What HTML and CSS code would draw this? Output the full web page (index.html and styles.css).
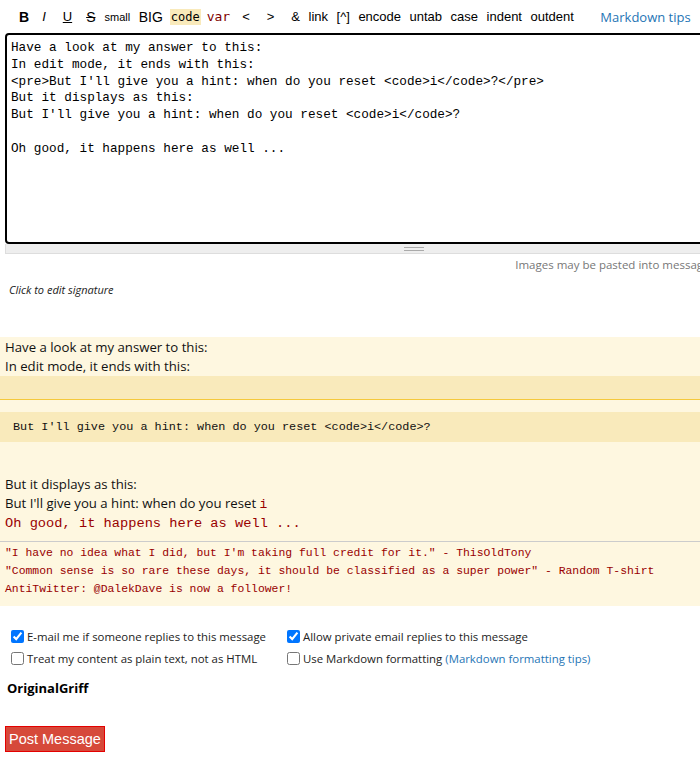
FILE: index.html
```html
<!DOCTYPE html>
<html>
<head>
    <title>Reply</title>
    <link rel="stylesheet" href="styles.css">
</head>
<body>
    <div class="editor">
        <div class="toolbar">
            <span class="tb bold">B</span>
            <span class="tb ital">I</span>
            <span class="tb under">U</span>
            <span class="tb strike">S</span>
            <span class="tb small">small</span>
            <span class="tb big">BIG</span>
            <span class="tb code">code</span>
            <span class="tb var">var</span>
            <span class="tb sym">&lt;</span>
            <span class="tb sym">&gt;</span>
            <span class="tb">&amp;</span>
            <span class="tb">link</span>
            <span class="tb">[^]</span>
            <span class="tb">encode</span>
            <span class="tb">untab</span>
            <span class="tb">case</span>
            <span class="tb">indent</span>
            <span class="tb">outdent</span>
            <a class="tips" href="#">Markdown tips</a>
        </div>
        <textarea class="msg" spellcheck="false">Have a look at my answer to this:
In edit mode, it ends with this:
&lt;pre&gt;But I'll give you a hint: when do you reset &lt;code&gt;i&lt;/code&gt;?&lt;/pre&gt;
But it displays as this:
But I'll give you a hint: when do you reset &lt;code&gt;i&lt;/code&gt;?

Oh good, it happens here as well ...</textarea>
        <div class="grip"><span></span></div>
        <div class="hint">Images may be pasted into messages</div>
    </div>

    <div class="sig-edit">Click to edit signature</div>

    <div class="preview">
        <p>Have a look at my answer to this:</p>
        <p>In edit mode, it ends with this:</p>
        <div class="band"></div>
        <pre class="pre-block">But I'll give you a hint: when do you reset &lt;code&gt;i&lt;/code&gt;?</pre>
        <p class="after">But it displays as this:</p>
        <p>But I'll give you a hint: when do you reset <code class="inline">i</code></p>
        <pre class="red">Oh good, it happens here as well ...</pre>
        <div class="signature">
            <div>"I have no idea what I did, but I'm taking full credit for it." - ThisOldTony</div>
            <div>"Common sense is so rare these days, it should be classified as a super power" - Random T-shirt</div>
            <div>AntiTwitter: @DalekDave is now a follower!</div>
        </div>
    </div>

    <div class="options">
        <label><input type="checkbox" checked> E-mail me if someone replies to this message</label>
        <label><input type="checkbox" checked> Allow private email replies to this message</label>
        <label><input type="checkbox"> Treat my content as plain text, not as HTML</label>
        <label><input type="checkbox"> Use Markdown formatting <a href="#">(Markdown formatting tips)</a></label>
    </div>

    <div class="author">OriginalGriff</div>

    <button class="post">Post Message</button>
</body>
</html>
```

FILE: styles.css
```css
html {
    overflow: hidden;
}

body {
    margin: 0;
    padding: 0 0 0 5px;
    font-family: "Open Sans", sans-serif;
    font-size: 13.2px;
    color: #111;
    background: #fff;
}

.editor {
    width: 710px;
}

.toolbar {
    display: flex;
    align-items: center;
    height: 33px;
    padding-left: 14px;
    font-family: "Liberation Sans", Arial, sans-serif;
    font-size: 13px;
    color: #000;
    white-space: nowrap;
}

.tb {
    margin-right: 8.5px;
}

.bold { font-weight: bold; font-size: 14px; margin-right: 13px; }
.ital { font-style: italic; margin-right: 17px; }
.under { text-decoration: underline; margin-right: 14px; }
.strike { text-decoration: line-through; margin-right: 9px; font-size: 14px; }
.small { font-size: 11px; }
.big { font-size: 14px; margin-right: 7px; }
.sym { margin-right: 17px; }

.code {
    background: #f9eabb;
    font-family: "DejaVu Sans Mono", monospace;
    font-size: 12px;
    padding: 1px 1px;
    margin-right: 6px;
}

.var {
    color: #800000;
    font-family: "DejaVu Sans Mono", monospace;
    font-size: 13px;
    margin-right: 12px;
}

.tips {
    margin-left: 18px;
    color: #1f75b5;
    text-decoration: none;
    font-family: "Open Sans", sans-serif;
    font-size: 13px;
}

.msg {
    display: block;
    box-sizing: border-box;
    width: 100%;
    height: 211px;
    border: 2px solid #000;
    border-radius: 4px;
    padding: 5px 4px;
    margin: 0;
    font-family: "Liberation Mono", monospace;
    font-size: 12.7px;
    line-height: 16.8px;
    color: #000;
    resize: none;
    outline: none;
}

.grip {
    height: 9px;
    background: #eee;
    border: 1px solid #ddd;
    border-top: none;
    display: flex;
    align-items: center;
    padding-left: 398px;
}

.grip span {
    width: 20px;
    height: 2px;
    border-top: 1px solid #aaa;
    border-bottom: 1px solid #aaa;
}

.hint {
    text-align: right;
    color: #777;
    font-size: 11.5px;
    padding-top: 3px;
}

.sig-edit {
    margin: 10px 0 0 4px;
    font-size: 11px;
    font-style: italic;
    color: #222;
}

.preview {
    margin: 40px 0 0 -5px;
    width: 720px;
    background: #fef7e0;
    padding: 1px 0 8px 5px;
    box-sizing: border-box;
}

.preview p {
    margin: 0;
    line-height: 19px;
}

.band {
    height: 23px;
    margin: 0 0 12px -5px;
    background: #f9eabb;
    border-bottom: 1px solid #f5c93c;
}

.pre-block {
    margin: 0 0 0 -5px;
    padding: 7px 13px;
    background: #f9eabb;
    font-family: "Liberation Mono", monospace;
    font-size: 11.8px;
    line-height: 16px;
    color: #111;
}

.preview .after {
    margin-top: 33px;
}

.inline {
    font-family: "Liberation Mono", monospace;
    color: #990000;
    font-size: 13px;
}

.red {
    margin: 0;
    font-family: "Liberation Mono", monospace;
    font-size: 13.7px;
    line-height: 19px;
    color: #990000;
}

.signature {
    margin: 8px 0 0 -5px;
    padding: 2px 0 0 5px;
    border-top: 1px solid #ccc;
    font-family: "Liberation Mono", monospace;
    font-size: 11.4px;
    line-height: 18px;
    color: #990000;
}

.options {
    display: grid;
    grid-template-columns: 276px auto;
    row-gap: 7px;
    margin: 23px 0 0 6px;
    font-size: 11.4px;
    color: #222;
}

.options label {
    display: flex;
    align-items: center;
    gap: 3px;
}

.options input {
    margin: 0;
    width: 13px;
    height: 13px;
}

.options a {
    color: #1f75b5;
    text-decoration: none;
}

.author {
    margin: 13px 0 0 2px;
    font-weight: bold;
    font-size: 13px;
    color: #000;
}

.post {
    margin-top: 29px;
    display: block;
    background: #d6493a;
    border: 1px solid #e40000;
    color: #fff;
    font-family: "Liberation Sans", Arial, sans-serif;
    font-size: 14.5px;
    padding: 0 3px;
    height: 26px;
    white-space: nowrap;
    cursor: pointer;
}
```
